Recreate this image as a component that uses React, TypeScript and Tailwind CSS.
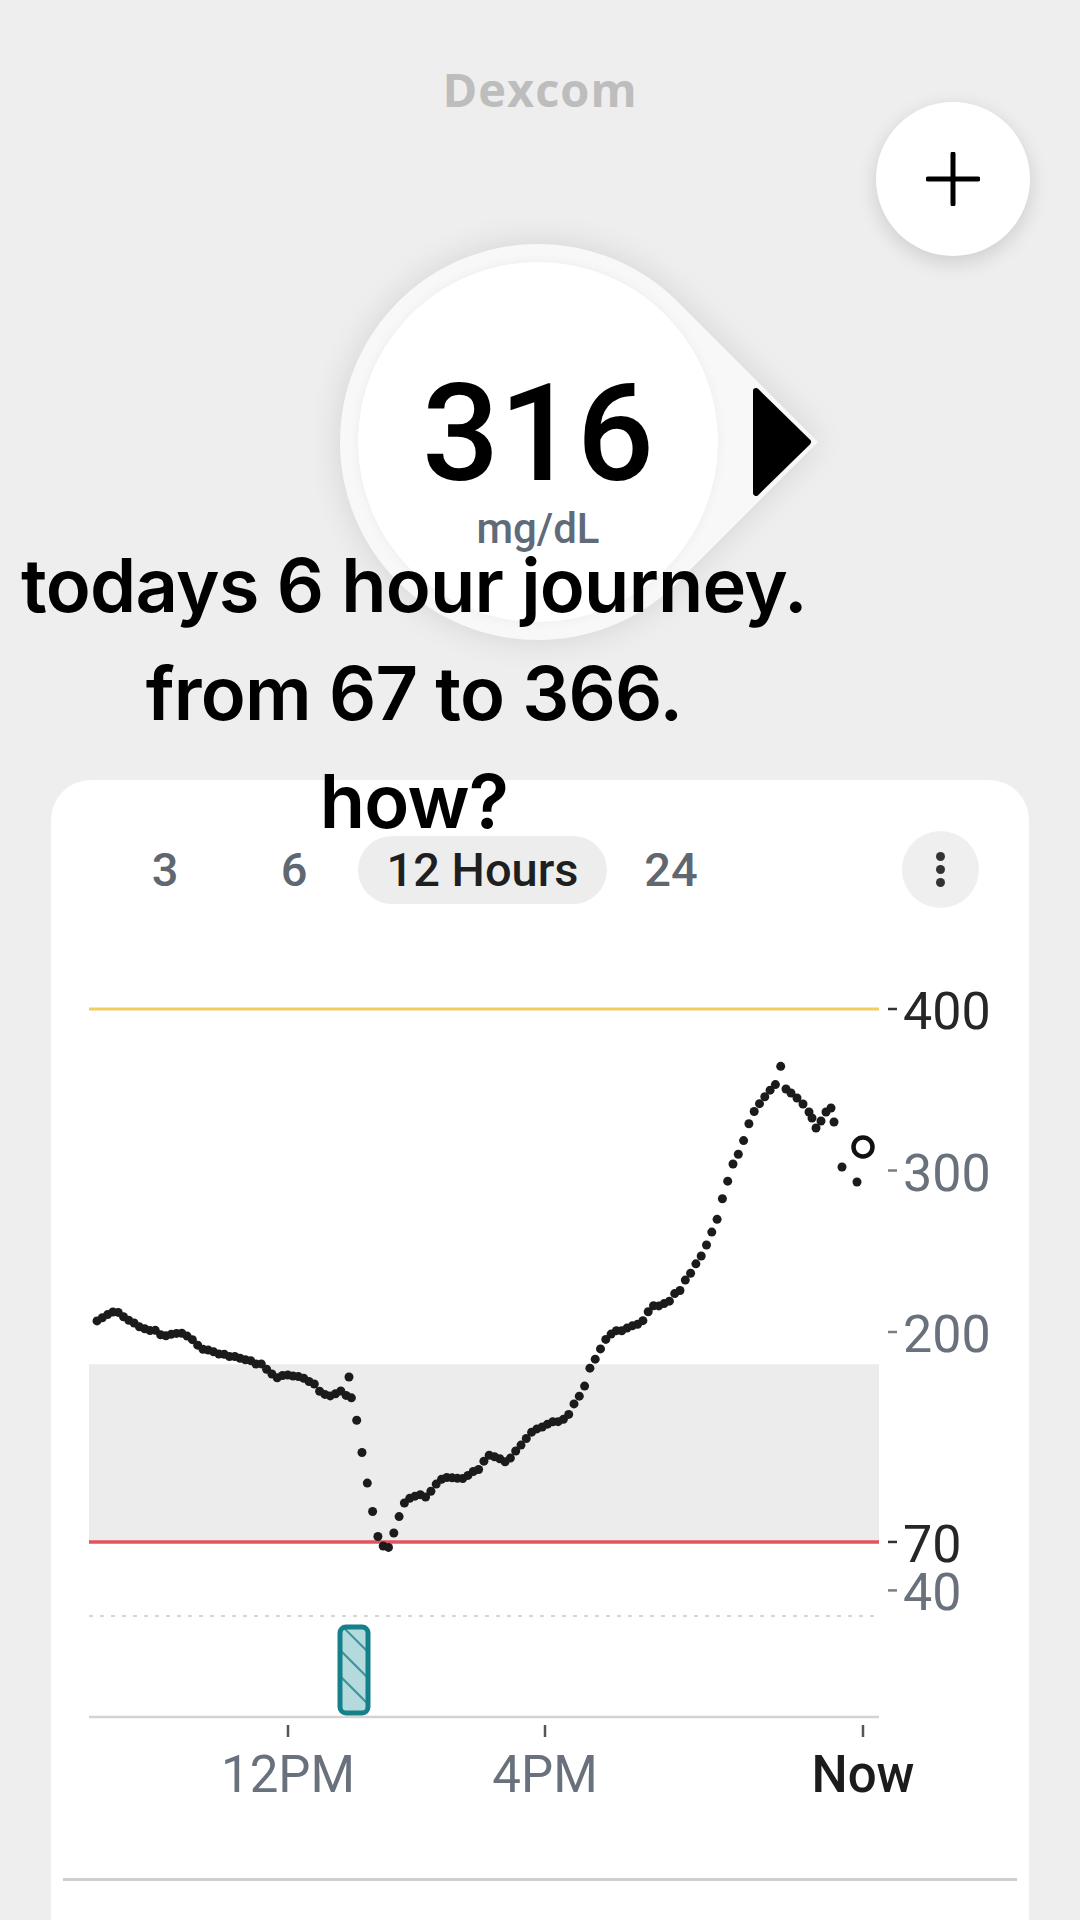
import React from 'react';

// glucose -> y in page pixels (400 at the yellow line, 70 at the red line)
const yOf = (v: number) => 1009 + (400 - v) * 1.615;

// trace keyframes, page coordinates
const keys: [number, number][] = [
  [97, 1322], [108, 1314], [116, 1312], [124, 1318], [132, 1323], [149, 1329], [168, 1336],
  [178, 1333], [191, 1338], [201, 1349], [214, 1353], [241, 1359], [260, 1364], [270, 1372],
  [277, 1377], [290, 1374], [300, 1376], [313, 1382], [319, 1392], [332, 1395], [342, 1391],
  [354, 1401], [359, 1437], [365, 1468], [370, 1498], [375, 1523], [380, 1545], [385, 1548],
  [390, 1548], [397, 1522], [403, 1503], [410, 1498], [421, 1493], [428, 1497], [434, 1485],
  [444, 1477], [461, 1480], [477, 1470], [490, 1455], [500, 1460], [507, 1462], [518, 1447],
  [533, 1432], [549, 1423], [566, 1418], [576, 1400], [585, 1387], [590, 1368], [602, 1345],
  [612, 1333], [625, 1330], [641, 1323], [651, 1307], [668, 1302], [681, 1288], [691, 1273],
  [700, 1257], [707, 1243], [714, 1227], [718, 1218], [723, 1197], [730, 1172], [735, 1160],
  [740, 1150], [748, 1127], [756, 1108], [763, 1097], [769, 1093], [776, 1083], [781, 1065],
];

const tail: [number, number][] = [
  [786, 1089], [791, 1093], [797, 1098], [803, 1104], [809, 1112], [812, 1118], [816, 1128],
  [821, 1121], [826, 1112], [831, 1108], [834, 1122], [842, 1167], [857, 1182], [349, 1377],
];

function interp(x: number) {
  for (let i = 0; i < keys.length - 1; i++) {
    const [x0, y0] = keys[i];
    const [x1, y1] = keys[i + 1];
    if (x >= x0 && x <= x1) return y0 + ((x - x0) / (x1 - x0)) * (y1 - y0);
  }
  return keys[keys.length - 1][1];
}

const dots: [number, number][] = [];
for (let x = 97; x <= 781; x += 5.3) {
  const j = Math.sin(x * 12.9898) * 43758.5453;
  const r = j - Math.floor(j);
  dots.push([x, interp(x) + (r - 0.5) * 3]);
}
dots.push(...tail);

const yTicks = [
  { v: 400, dark: true },
  { v: 300, dark: false },
  { v: 200, dark: false },
  { v: 70, dark: true },
  { v: 40, dark: false },
];

function Chart() {
  return (
    <svg width="978" height="960" viewBox="51 908 978 960" className="block">
      <defs>
        <clipPath id="bar">
          <rect x="340" y="1627" width="28" height="86" rx="6" />
        </clipPath>
      </defs>
      {/* target range */}
      <rect x="89" y={yOf(180)} width="790" height={yOf(70) - yOf(180)} fill="#ececec" />
      <line x1="89" x2="879" y1={yOf(400)} y2={yOf(400)} stroke="#f1cd60" strokeWidth="3" />
      <line x1="89" x2="879" y1={yOf(70)} y2={yOf(70)} stroke="#e2545d" strokeWidth="3.5" />
      <line x1="89" x2="879" y1="1616" y2="1616" stroke="#d6d6d6" strokeWidth="2" strokeDasharray="4 7" />
      <line x1="89" x2="879" y1="1717" y2="1717" stroke="#d3d3d3" strokeWidth="2.5" />

      {yTicks.map(t => (
        <g key={t.v}>
          <line x1="888" x2="897" y1={yOf(t.v)} y2={yOf(t.v)} stroke={t.dark ? '#333' : '#777e88'} strokeWidth="2.5" />
          <text x="903" y={yOf(t.v) + 20} fontFamily="Roboto" fontSize="52" fill={t.dark ? '#262626' : '#69717c'}>
            {t.v}
          </text>
        </g>
      ))}

      {[288, 545, 863].map(x => (
        <line key={x} x1={x} x2={x} y1="1725" y2="1737" stroke="#555" strokeWidth="2.5" />
      ))}
      <text x="288" y="1792" textAnchor="middle" fontFamily="Roboto" fontSize="51" fill="#69717c">12PM</text>
      <text x="545" y="1792" textAnchor="middle" fontFamily="Roboto" fontSize="51" fill="#69717c">4PM</text>
      <text x="863" y="1792" textAnchor="middle" fontFamily="Roboto" fontSize="51" fontWeight="500" fill="#1c1c1c">Now</text>

      {/* event bar */}
      <rect x="340" y="1627" width="28" height="86" rx="6" fill="#b4dadd" />
      <g clipPath="url(#bar)" stroke="#3a959c" strokeWidth="2">
        <line x1="336" y1="1620" x2="376" y2="1660" />
        <line x1="336" y1="1646" x2="376" y2="1686" />
        <line x1="336" y1="1672" x2="376" y2="1712" />
      </g>
      <rect x="340" y="1627" width="28" height="86" rx="6" fill="none" stroke="#14808a" strokeWidth="5" />

      {dots.map(([x, y], i) => (
        <circle key={i} cx={x} cy={y} r="4.5" fill="#1b1b1b" />
      ))}
      <circle cx="863" cy="1147" r="9.5" fill="#fff" stroke="#111" strokeWidth="4.5" />
    </svg>
  );
}

export default function App() {
  return (
    <div className="relative w-[1080px] h-[1920px] overflow-hidden bg-[#eeeeee] font-['Roboto',sans-serif]">
      <div className="pt-[66px] flex justify-center">
        <span className="font-['Open_Sans',sans-serif] font-bold text-[47px] leading-none tracking-[1px] text-[#bdbdbd]">
          Dexcom
        </span>
      </div>

      {/* floating add button */}
      <button className="absolute left-[876px] top-[102px] w-[154px] h-[154px] rounded-full bg-white shadow-[0_6px_20px_rgba(0,0,0,0.14)] flex items-center justify-center">
        <svg width="54" height="54" viewBox="0 0 54 54">
          <line x1="27" y1="2" x2="27" y2="52" stroke="#000" strokeWidth="5" strokeLinecap="round" />
          <line x1="2" y1="27" x2="52" y2="27" stroke="#000" strokeWidth="5" strokeLinecap="round" />
        </svg>
      </button>

      {/* current reading */}
      <div className="relative mt-[131px] ml-[340px] w-[396px] h-[396px] flex items-center justify-center">
        <div className="absolute inset-0 -rotate-45 rounded-[50%_50%_0_50%] bg-[#f8f8f8] shadow-[0_0_34px_rgba(0,0,0,0.11)]" />
        <div className="relative w-[360px] h-[360px] rounded-full bg-white shadow-[0_0_12px_rgba(0,0,0,0.05)] flex flex-col items-center pt-[104px]">
          <span className="text-[136px] leading-none font-medium text-black">316</span>
          <span className="mt-[6px] text-[42px] leading-none font-medium text-[#5f6b78]">mg/dL</span>
        </div>
        <svg className="absolute left-[413px] top-[144px]" width="60" height="108" viewBox="0 0 60 108">
          <polygon points="3,3 55,54 3,105" fill="#000" stroke="#000" strokeWidth="6" strokeLinejoin="round" />
        </svg>
      </div>

      {/* history card */}
      <div className="mt-[140px] ml-[51px] w-[978px] h-[1200px] rounded-[40px] bg-white">
        <div className="flex items-center pt-[51px] text-[47px] leading-none font-medium">
          <div className="ml-[84px] w-[60px] text-center text-[#5f6771]">3</div>
          <div className="ml-[69px] w-[60px] text-center text-[#5f6771]">6</div>
          <div className="ml-[34px] w-[249px] h-[68px] rounded-full bg-[#ededed] flex items-center justify-center text-[#1f1f1f]">
            12 Hours
          </div>
          <div className="ml-[29px] w-[70px] text-center text-[#5f6771]">24</div>
          <div className="ml-[196px] w-[77px] h-[77px] rounded-full bg-[#efefef] flex flex-col items-center justify-center gap-[4px]">
            <span className="w-[9px] h-[9px] rounded-full bg-[#333]" />
            <span className="w-[9px] h-[9px] rounded-full bg-[#333]" />
            <span className="w-[9px] h-[9px] rounded-full bg-[#333]" />
          </div>
        </div>
        <Chart />
        <div className="mt-[10px] mx-[12px] h-[3px] bg-[#cfcfcf]" />
      </div>

      {/* caption overlay */}
      <div className="absolute left-0 top-[531px] w-[828px] text-center font-['Inter',sans-serif] font-semibold text-[74px] leading-[108px] tracking-[-0.01em] text-black">
        <div>todays 6 hour journey.</div>
        <div>from 67 to 366.</div>
        <div>how?</div>
      </div>
    </div>
  );
}
